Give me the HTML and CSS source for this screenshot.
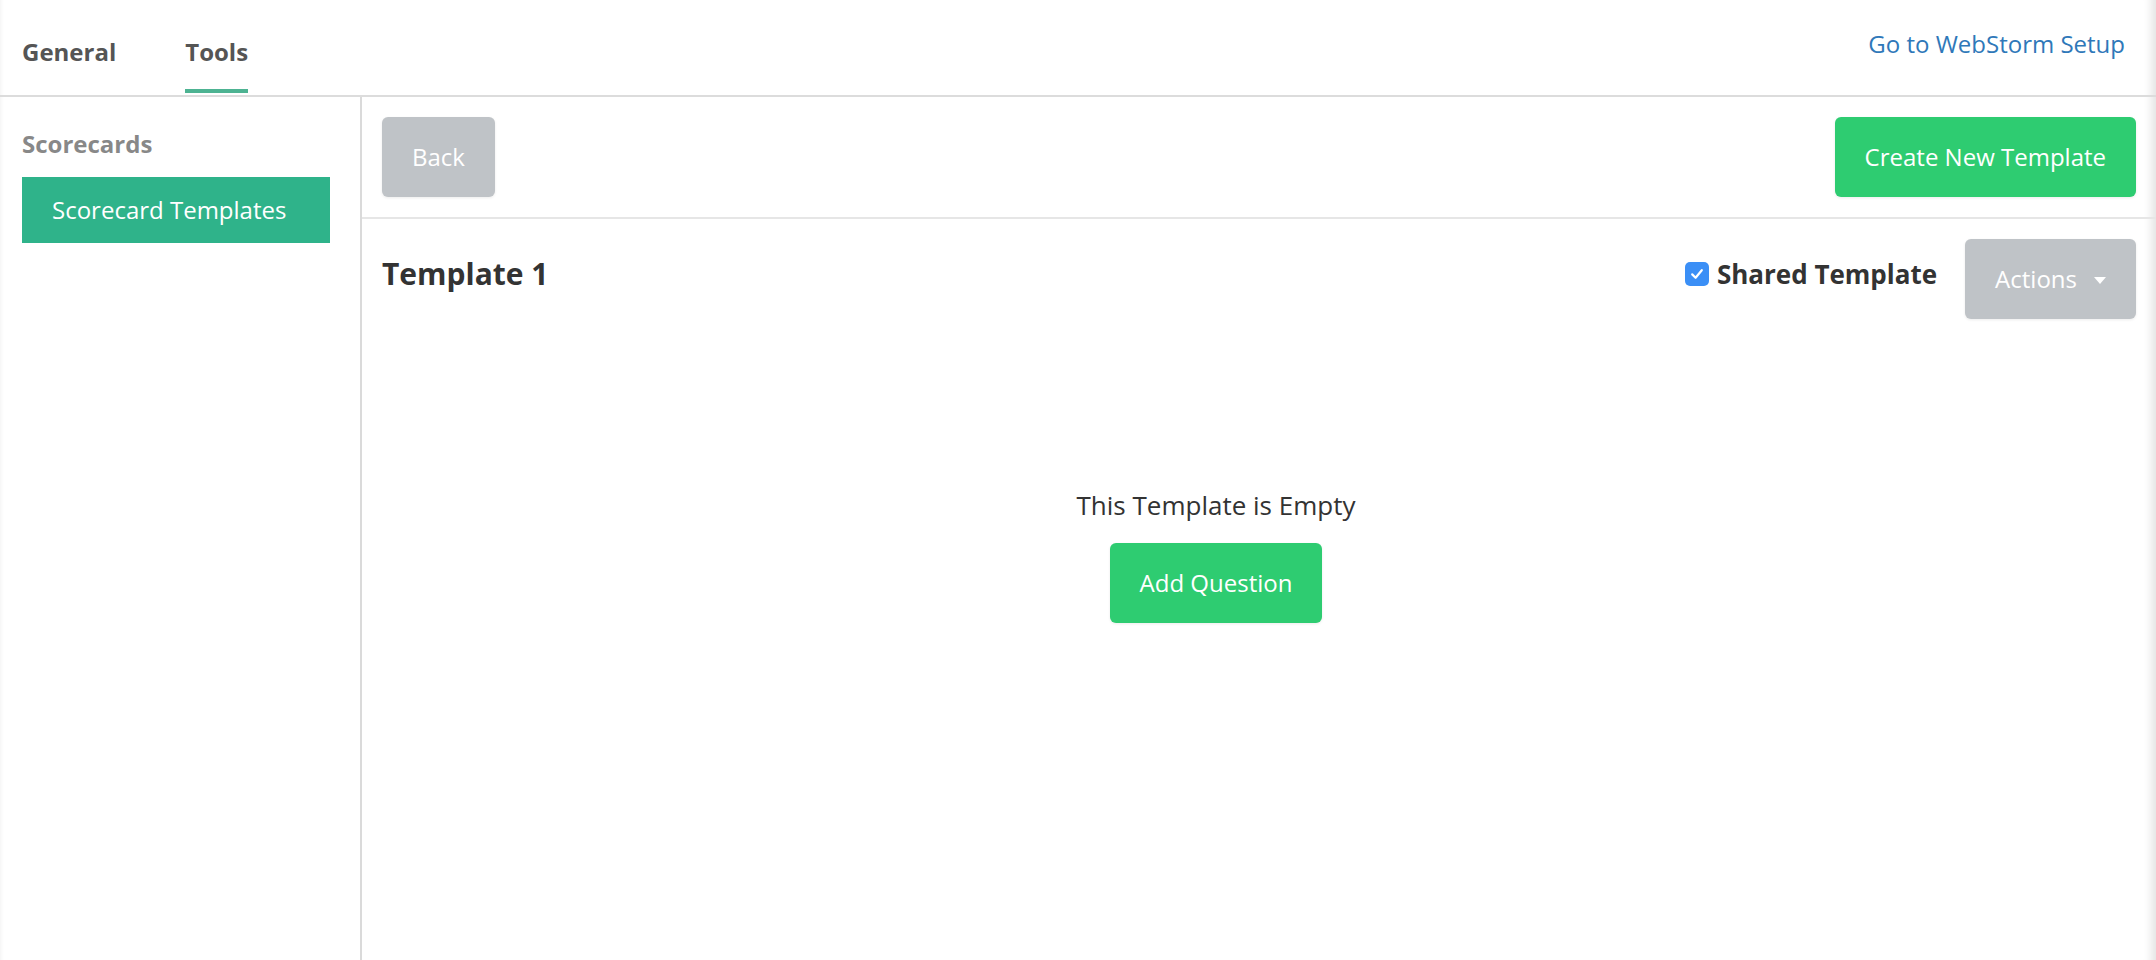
FILE: index.html
```html
<!DOCTYPE html>
<html lang="en">
<head>
    <meta charset="UTF-8">
    <meta name="viewport" content="width=device-width, initial-scale=1.0">
    <title>Scorecard Templates</title>
    <link rel="stylesheet" href="styles.css">
</head>
<body>
    <div class="page">
        <!-- Top Tabs -->
        <div class="topbar">
            <div class="tabs">
                <a class="tab">General</a>
                <a class="tab active">Tools</a>
            </div>
            <a class="setup-link" href="#">Go to WebStorm Setup</a>
        </div>

        <div class="layout">
            <!-- Sidebar -->
            <div class="sidebar">
                <h4 class="sidebar-title">Scorecards</h4>
                <a class="sidebar-item active">Scorecard Templates</a>
            </div>

            <!-- Main Content -->
            <div class="main">
                <div class="toolbar">
                    <button class="btn btn-gray">Back</button>
                    <button class="btn btn-green">Create New Template</button>
                </div>

                <div class="template-header">
                    <h2 class="template-title">Template 1</h2>
                    <div class="template-controls">
                        <label class="shared">
                            <span class="checkbox">
                                <svg width="16" height="16" viewBox="0 0 16 16">
                                    <path d="M3.2 8.4 L6.6 11.8 L12.8 4.2" fill="none" stroke="#fff" stroke-width="2.2" stroke-linecap="round" stroke-linejoin="round"/>
                                </svg>
                            </span>
                            Shared Template
                        </label>
                        <button class="btn btn-gray">Actions<span class="caret"></span></button>
                    </div>
                </div>

                <div class="empty-state">
                    <p class="empty-text">This Template is Empty</p>
                    <button class="btn btn-green">Add Question</button>
                </div>
            </div>
        </div>
    </div>
</body>
</html>
```

FILE: styles.css
```css
body {
    font-family: 'Open Sans', 'Noto Sans', sans-serif;
    background-color: #fff;
    margin: 0;
    padding: 0;
    color: #333;
}

.page {
    min-height: 100vh;
    box-shadow: inset 5px 0 5px -5px rgba(0, 0, 0, 0.08), inset -14px 0 10px -10px rgba(0, 0, 0, 0.12);
}

/* Top Tabs */
.topbar {
    display: flex;
    justify-content: space-between;
    align-items: flex-start;
    height: 95px;
    padding: 0 31px 0 22px;
    border-bottom: 2px solid #dcdcdc;
}

.tabs {
    display: flex;
    gap: 69px;
}

.tab {
    display: block;
    padding: 36px 0 21px;
    line-height: 32px;
    font-size: 24px;
    font-weight: bold;
    color: #555;
    border-bottom: 4px solid transparent;
}

.tab.active {
    border-bottom-color: #4db392;
}

.setup-link {
    padding-top: 28px;
    line-height: 32px;
    font-size: 24px;
    color: #2f78b9;
    text-decoration: none;
}

/* Sidebar */
.layout {
    display: flex;
    min-height: calc(100vh - 97px);
}

.sidebar {
    width: 308px;
    padding: 31px 30px 0 22px;
    border-right: 2px solid #dadada;
}

.sidebar-title {
    margin: 0 0 17px;
    line-height: 32px;
    font-size: 24px;
    font-weight: bold;
    color: #888;
}

.sidebar-item {
    display: block;
    padding: 17px 30px;
    line-height: 32px;
    font-size: 24px;
    color: #fff;
    background-color: #2fb38a;
}

/* Main */
.main {
    flex: 1;
}

.toolbar {
    display: flex;
    justify-content: space-between;
    padding: 20px;
    border-bottom: 2px solid #e6e6e6;
}

.btn {
    display: inline-flex;
    align-items: center;
    justify-content: center;
    height: 80px;
    padding: 0 30px;
    border: none;
    border-radius: 6px;
    font-family: inherit;
    font-size: 24px;
    line-height: 32px;
    color: #fff;
    cursor: pointer;
    box-shadow: 0 1px 3px rgba(0, 0, 0, 0.08);
}

.btn-gray {
    background-color: #bfc3c7;
}

.btn-green {
    background-color: #2ecc71;
}

.template-header {
    display: flex;
    justify-content: space-between;
    align-items: flex-start;
    padding: 20px;
}

.template-title {
    margin: 15px 0 0;
    font-size: 30px;
    line-height: 40px;
    font-weight: bold;
    color: #333;
}

.template-controls {
    display: flex;
    align-items: center;
    gap: 28px;
}

.shared {
    display: flex;
    align-items: center;
    gap: 8px;
    margin-bottom: 10px;
    font-size: 26px;
    font-weight: bold;
    color: #333;
}

.checkbox {
    display: flex;
    align-items: center;
    justify-content: center;
    width: 24px;
    height: 24px;
    border-radius: 5px;
    background-color: #3b8ff6;
}

.caret {
    display: inline-block;
    margin-left: 17px;
    margin-top: 2px;
    border-top: 7px solid #fff;
    border-left: 6.5px solid transparent;
    border-right: 6.5px solid transparent;
}

/* Empty State */
.empty-state {
    display: flex;
    flex-direction: column;
    align-items: center;
    padding: 149px 86px 0 0;
}

.empty-text {
    margin: 0 0 21px;
    font-size: 26px;
    line-height: 34px;
    color: #333;
}
```
